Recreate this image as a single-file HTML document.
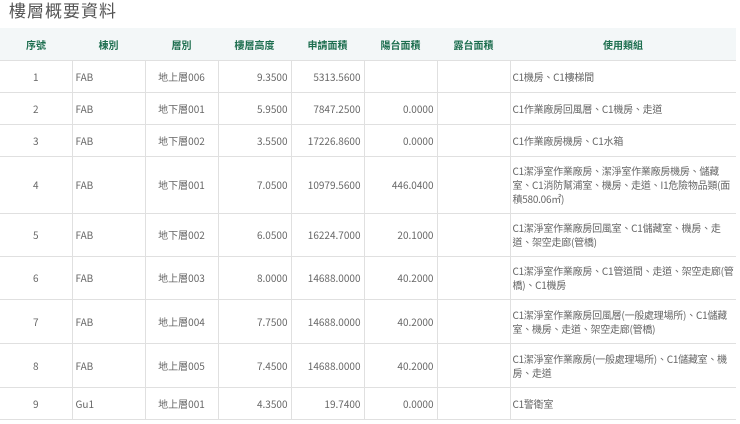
<!DOCTYPE html>
<html><head><meta charset="utf-8"><style>
html,body{margin:0;padding:0;background:#fff;width:740px;height:424px;overflow:hidden}
body{font-family:"Noto Sans CJK TC","Liberation Sans",sans-serif}
h1{position:absolute;left:9px;top:-2px;margin:0;font-size:17px;font-weight:normal;color:#555;line-height:24px;letter-spacing:1px}
table{position:absolute;left:0;top:28px;width:736px;border-collapse:collapse;table-layout:fixed;font-size:10px;color:#666}
th{background:#f3f7f8;color:#1d6e4f;font-weight:bold;height:32px;padding:0;border-bottom:1px solid #e0e0e0}
td{border:1px solid #e0e0e0;padding:0 3px 0 3px;line-height:14px;white-space:nowrap;overflow:hidden}
td:first-child{border-left:none;text-align:center}
td:last-child{border-right:none;padding:0 2px 0 2px;letter-spacing:-0.25px}
.c{text-align:center}.r{text-align:right}
</style></head><body>
<h1>樓層概要資料</h1>
<table>
<colgroup><col style="width:72px"><col style="width:73px"><col style="width:73px"><col style="width:73px"><col style="width:73px"><col style="width:73px"><col style="width:73px"><col style="width:226px"></colgroup>
<tr><th>序號</th><th>棟別</th><th>層別</th><th>樓層高度</th><th>申請面積</th><th>陽台面積</th><th>露台面積</th><th>使用類組</th></tr>
<tr style="height:32px"><td>1</td><td>FAB</td><td class="c">地上層006</td><td class="r">9.3500</td><td class="r">5313.5600</td><td class="r"></td><td></td><td>C1機房、C1樓梯間</td></tr>
<tr style="height:32px"><td>2</td><td>FAB</td><td class="c">地下層001</td><td class="r">5.9500</td><td class="r">7847.2500</td><td class="r">0.0000</td><td></td><td>C1作業廠房回風層、C1機房、走道</td></tr>
<tr style="height:32px"><td>3</td><td>FAB</td><td class="c">地下層002</td><td class="r">3.5500</td><td class="r">17226.8600</td><td class="r">0.0000</td><td></td><td>C1作業廠房機房、C1水箱</td></tr>
<tr style="height:57px"><td>4</td><td>FAB</td><td class="c">地下層001</td><td class="r">7.0500</td><td class="r">10979.5600</td><td class="r">446.0400</td><td></td><td>C1潔淨室作業廠房、潔淨室作業廠房機房、儲藏<br>室、C1消防幫浦室、機房、走道、I1危險物品類(面<br>積580.06㎡)</td></tr>
<tr style="height:43px"><td>5</td><td>FAB</td><td class="c">地下層002</td><td class="r">6.0500</td><td class="r">16224.7000</td><td class="r">20.1000</td><td></td><td>C1潔淨室作業廠房回風室、C1儲藏室、機房、走<br>道、架空走廊(管橋)</td></tr>
<tr style="height:43px"><td>6</td><td>FAB</td><td class="c">地上層003</td><td class="r">8.0000</td><td class="r">14688.0000</td><td class="r">40.2000</td><td></td><td>C1潔淨室作業廠房、C1管道間、走道、架空走廊(管<br>橋)、C1機房</td></tr>
<tr style="height:44px"><td>7</td><td>FAB</td><td class="c">地上層004</td><td class="r">7.7500</td><td class="r">14688.0000</td><td class="r">40.2000</td><td></td><td>C1潔淨室作業廠房回風層(一般處理場所)、C1儲藏<br>室、機房、走道、架空走廊(管橋)</td></tr>
<tr style="height:44px"><td>8</td><td>FAB</td><td class="c">地上層005</td><td class="r">7.4500</td><td class="r">14688.0000</td><td class="r">40.2000</td><td></td><td>C1潔淨室作業廠房(一般處理場所)、C1儲藏室、機<br>房、走道</td></tr>
<tr style="height:32px"><td>9</td><td>Gu1</td><td class="c">地上層001</td><td class="r">4.3500</td><td class="r">19.7400</td><td class="r">0.0000</td><td></td><td>C1警衛室</td></tr>
</table>
</body></html>
